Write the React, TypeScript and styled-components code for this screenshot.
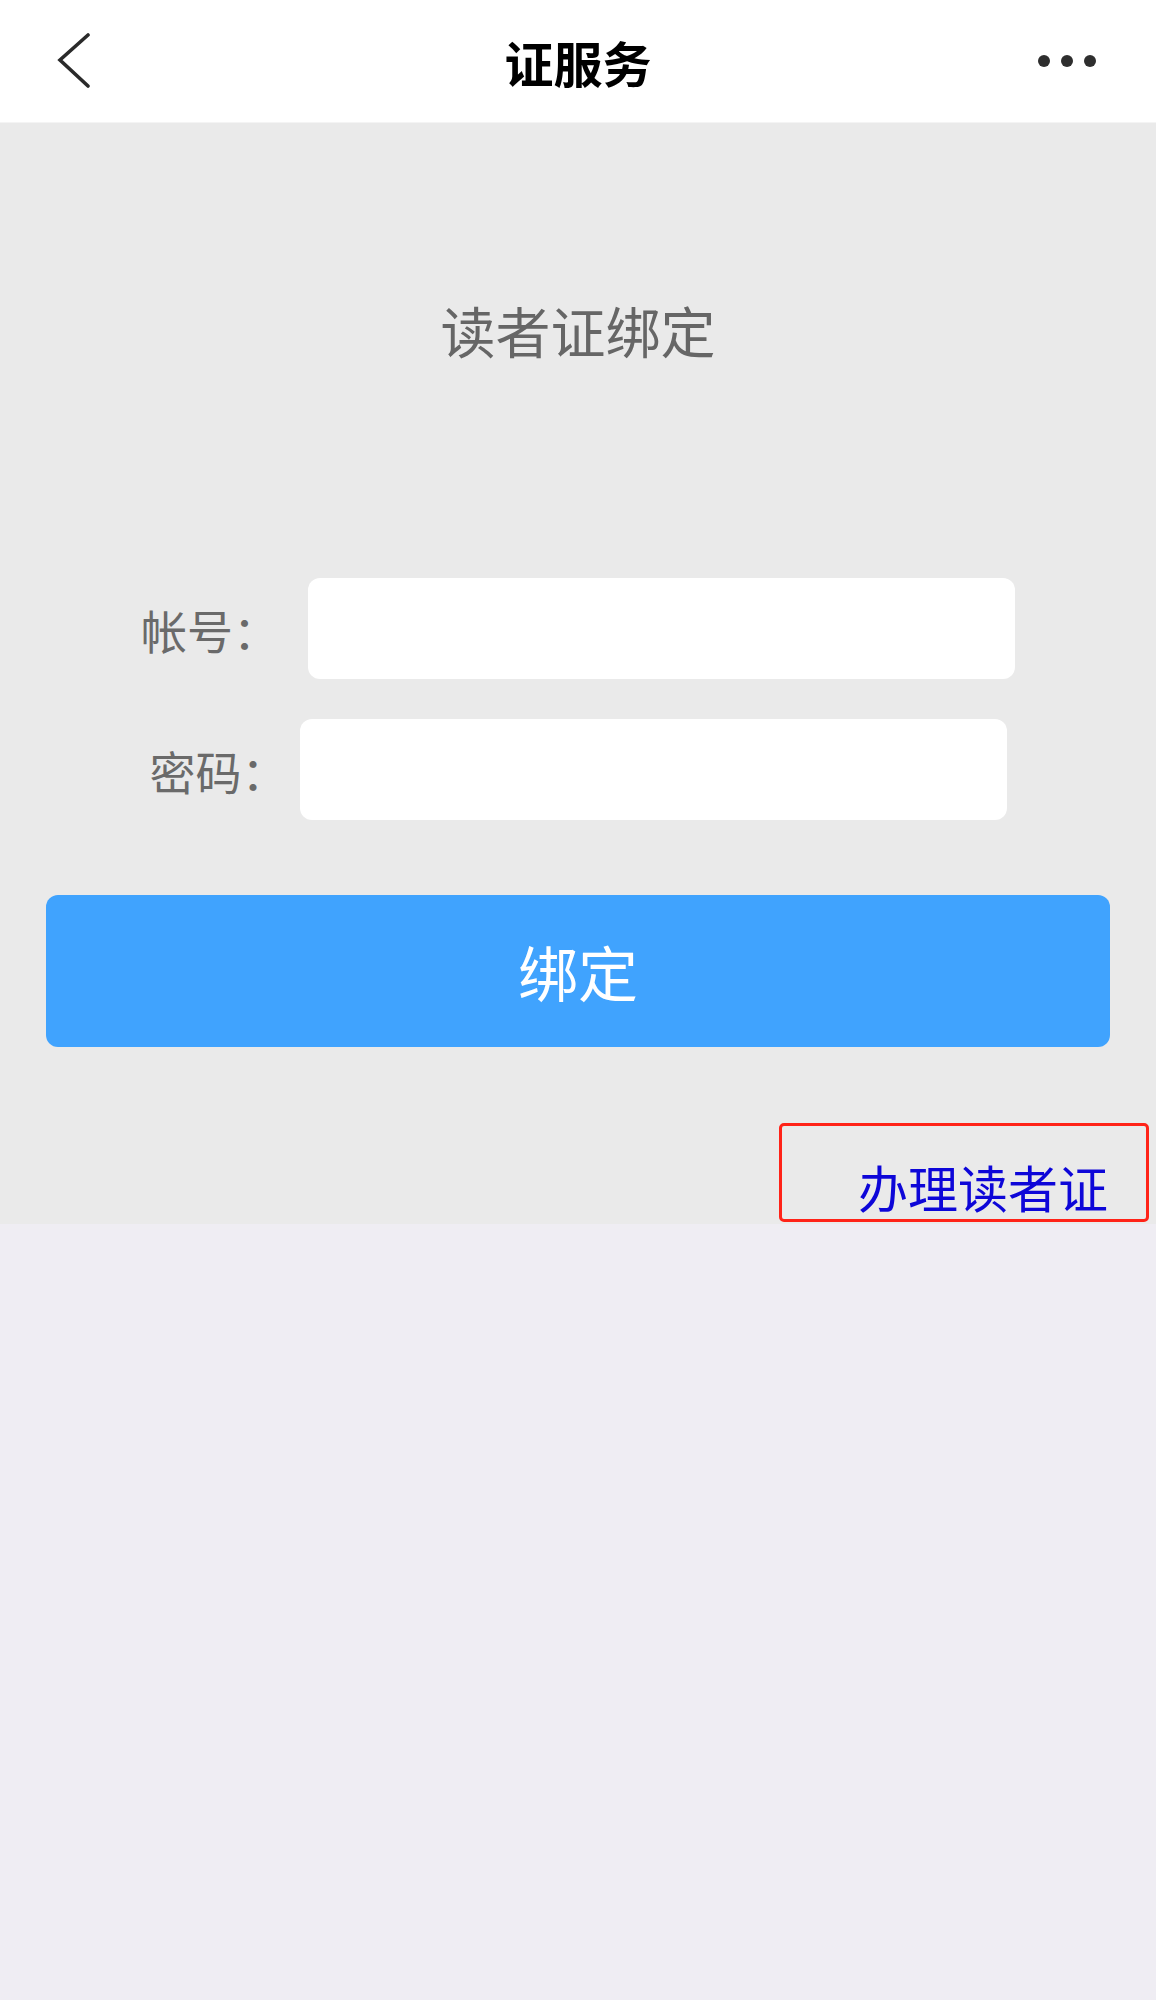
import React from 'react'
import styled, { createGlobalStyle } from 'styled-components'

/*
* Styles
*/

const GlobalStyle = createGlobalStyle`
  html, body {
    margin: 0;
    padding: 0;
    background: #efedf3;
  }

  body {
    font-family: "Noto Sans CJK SC", "Noto Sans", sans-serif;
  }
`

const Page = styled.div`
  display: flex;
  flex-direction: column;
  min-height: 2000px;
  width: 1156px;
  background: #efedf3;
`

const NavBar = styled.header`
  display: grid;
  grid-template-columns: 200px 1fr 200px;
  align-items: center;
  height: 122px;
  background: #ffffff;
  border-bottom: 1px solid #f4f4f4;
`

const BackButton = styled.div`
  display: flex;
  align-items: center;
  padding-left: 57px;
`

const NavTitle = styled.h1`
  margin: 0;
  color: #000000;
  font-size: 49px;
  font-weight: 700;
  line-height: 1;
  text-align: center;
`

const MoreButton = styled.div`
  display: flex;
  justify-content: flex-end;
  gap: 11px;
  padding-right: 60px;
`

const Dot = styled.span`
  width: 12px;
  height: 12px;
  border-radius: 50%;
  background: #2e2e2e;
`

const Panel = styled.main`
  display: flex;
  flex-direction: column;
  background: #eaeaea;
`

const Heading = styled.h2`
  margin: 174px 0 0;
  color: #666666;
  font-size: 55px;
  font-weight: 400;
  line-height: 64px;
  text-align: center;
`

const Form = styled.div`
  display: flex;
  flex-direction: column;
  gap: 40px;
  margin-top: 217px;
`

const FieldRow = styled.label`
  display: flex;
  align-items: center;
  justify-content: center;
`

const FieldLabel = styled.span<{ $gap: number }>`
  margin-right: ${p => p.$gap}px;
  color: #6a6a6a;
  font-size: 46px;
  line-height: 1;
`

const Input = styled.input`
  width: 707px;
  height: 101px;
  box-sizing: border-box;
  border: none;
  border-radius: 12px;
  background: #ffffff;
  outline: none;
  font-size: 40px;
  padding: 0 24px;
`

const BindButton = styled.button`
  margin: 75px 46px 0;
  height: 152px;
  border: none;
  border-radius: 12px;
  background: #40a3fe;
  color: #ffffff;
  font-family: inherit;
  font-size: 60px;
  font-weight: 400;
  line-height: 1;
`

const LinkRow = styled.div`
  display: flex;
  justify-content: flex-end;
  padding: 76px 7px 2px 0;
`

const LinkBox = styled.div`
  display: flex;
  align-items: flex-end;
  justify-content: flex-end;
  width: 370px;
  height: 99px;
  box-sizing: border-box;
  padding: 0 38px 8px 0;
  border: 3px solid #ff2318;
  border-radius: 5px;
`

const RegisterLink = styled.a`
  color: #0d06d8;
  font-size: 50px;
  line-height: 1;
  text-decoration: none;
`

/*
* Components
*/

const ChevronLeft = () => (
  <svg width="36" height="56" viewBox="0 0 36 56" fill="none">
    <path
      d="M31 2 L3 27 L31 53"
      stroke="#2a2a2a"
      strokeWidth="3.6"
      strokeLinecap="round"
      strokeLinejoin="miter"
    />
  </svg>
)

const fields = [
  { label: '帐号：', gap: 29, type: 'text' },
  { label: '密码：', gap: 12, type: 'password' },
]

export default function App() {
  return (
    <Page>
      <GlobalStyle />
      <NavBar>
        <BackButton>
          <ChevronLeft />
        </BackButton>
        <NavTitle>证服务</NavTitle>
        <MoreButton>
          <Dot />
          <Dot />
          <Dot />
        </MoreButton>
      </NavBar>
      <Panel>
        <Heading>读者证绑定</Heading>
        <Form>
          {fields.map(f => (
            <FieldRow key={f.label}>
              <FieldLabel $gap={f.gap}>{f.label}</FieldLabel>
              <Input type={f.type} />
            </FieldRow>
          ))}
        </Form>
        <BindButton>绑定</BindButton>
        <LinkRow>
          <LinkBox>
            <RegisterLink href="#">办理读者证</RegisterLink>
          </LinkBox>
        </LinkRow>
      </Panel>
    </Page>
  )
}
